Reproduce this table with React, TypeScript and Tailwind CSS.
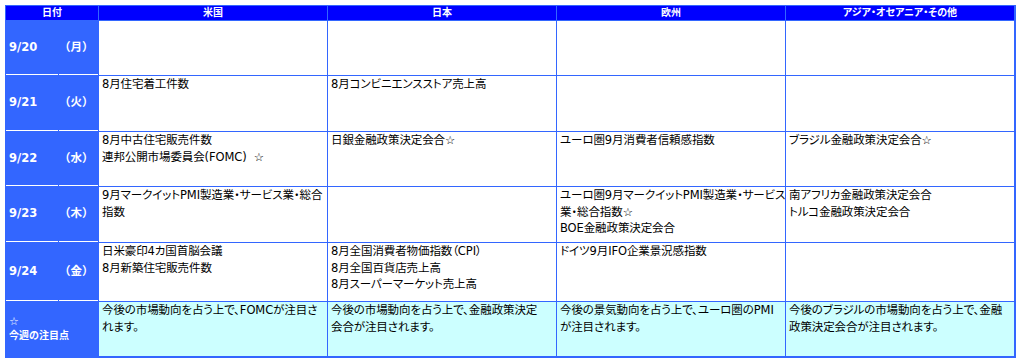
const font = "font-['DejaVu_Sans','Noto_Sans_CJK_JP',sans-serif]";

type Row = { date: string; day: string; h: string; cells: string[][] };

const rows: Row[] = [
  { date: '9/20', day: '（月）', h: 'h-[54px]', cells: [[], [], [], []] },
  {
    date: '9/21',
    day: '（火）',
    h: 'h-[55px]',
    cells: [['8月住宅着工件数'], ['8月コンビニエンスストア売上高'], [], []],
  },
  {
    date: '9/22',
    day: '（水）',
    h: 'h-[54px]',
    cells: [
      ['8月中古住宅販売件数', '連邦公開市場委員会(FOMC)\u00a0 ☆'],
      ['日銀金融政策決定会合☆'],
      ['ユーロ圏9月消費者信頼感指数'],
      ['ブラジル金融政策決定会合☆'],
    ],
  },
  {
    date: '9/23',
    day: '（木）',
    h: 'h-[55px]',
    cells: [
      ['9月マークイットPMI製造業・サービス業・総合', '指数'],
      [],
      ['ユーロ圏9月マークイットPMI製造業・サービス', '業・総合指数☆', 'BOE金融政策決定会合'],
      ['南アフリカ金融政策決定会合', 'トルコ金融政策決定会合'],
    ],
  },
  {
    date: '9/24',
    day: '（金）',
    h: 'h-[58px]',
    cells: [
      ['日米豪印4カ国首脳会議', '8月新築住宅販売件数'],
      ['8月全国消費者物価指数（CPI）', '8月全国百貨店売上高', '8月スーパーマーケット売上高'],
      ['ドイツ9月IFO企業景況感指数'],
      [],
    ],
  },
];

const notes: string[][] = [
  ['今後の市場動向を占う上で、FOMCが注目さ', 'れます。'],
  ['今後の市場動向を占う上で、金融政策決定', '会合が注目されます。'],
  ['今後の景気動向を占う上で、ユーロ圏のPMI', 'が注目されます。'],
  ['今後のブラジルの市場動向を占う上で、金融', '政策決定会合が注目されます。'],
];

const heads = ['米国', '日本', '欧州', 'アジア・オセアニア・その他'];

function Cell({ lines, bg }: { lines: string[]; bg: string }) {
  return (
    <div
      className={`${bg} overflow-hidden whitespace-nowrap px-[3px] text-[11.5px] leading-[16.5px] tracking-[-0.1px] text-black [font-feature-settings:'palt']`}
    >
      {lines.map((l, i) => (
        <div key={i}>{l}</div>
      ))}
    </div>
  );
}

export default function App() {
  return (
    <div className={`min-h-screen bg-white pt-[5px] pl-[5px] ${font}`}>
      <div className="grid w-[1011px] grid-cols-[52px_39px_1fr_1fr_1fr_1fr] gap-px bg-[#3366ff] p-px pr-[2px] pb-[2px]">
        {/* header */}
        <div className="col-span-2 h-[14px] bg-[#0000ff] text-center text-[10px] font-bold leading-[14px] text-white [font-feature-settings:'palt']">
          日付
        </div>
        {heads.map((h) => (
          <div
            key={h}
            className="h-[14px] bg-[#0000ff] text-center text-[10px] font-bold leading-[14px] text-white [font-feature-settings:'palt']"
          >
            {h}
          </div>
        ))}

        {rows.map((r) => (
          <div key={r.date} className="contents">
            <div
              className={`${r.h} flex items-center border-b border-white bg-[#3366ff] pl-[3px] text-[11.5px] font-bold text-white`}
            >
              {r.date}
            </div>
            <div className="flex items-center border-b border-white bg-[#3366ff] text-[11.5px] font-bold text-white">
              {r.day}
            </div>
            {r.cells.map((c, i) => (
              <Cell key={i} lines={c} bg="bg-white" />
            ))}
          </div>
        ))}

        {/* notes row */}
        <div className="col-span-2 flex h-[54px] flex-col justify-center bg-[#3366ff] pl-[3px] text-[10px] font-bold leading-[14px] text-white">
          <div className="text-[11px]">☆</div>
          <div>今週の注目点</div>
        </div>
        {notes.map((n, i) => (
          <Cell key={i} lines={n} bg="bg-[#ccffff]" />
        ))}
      </div>
    </div>
  );
}
